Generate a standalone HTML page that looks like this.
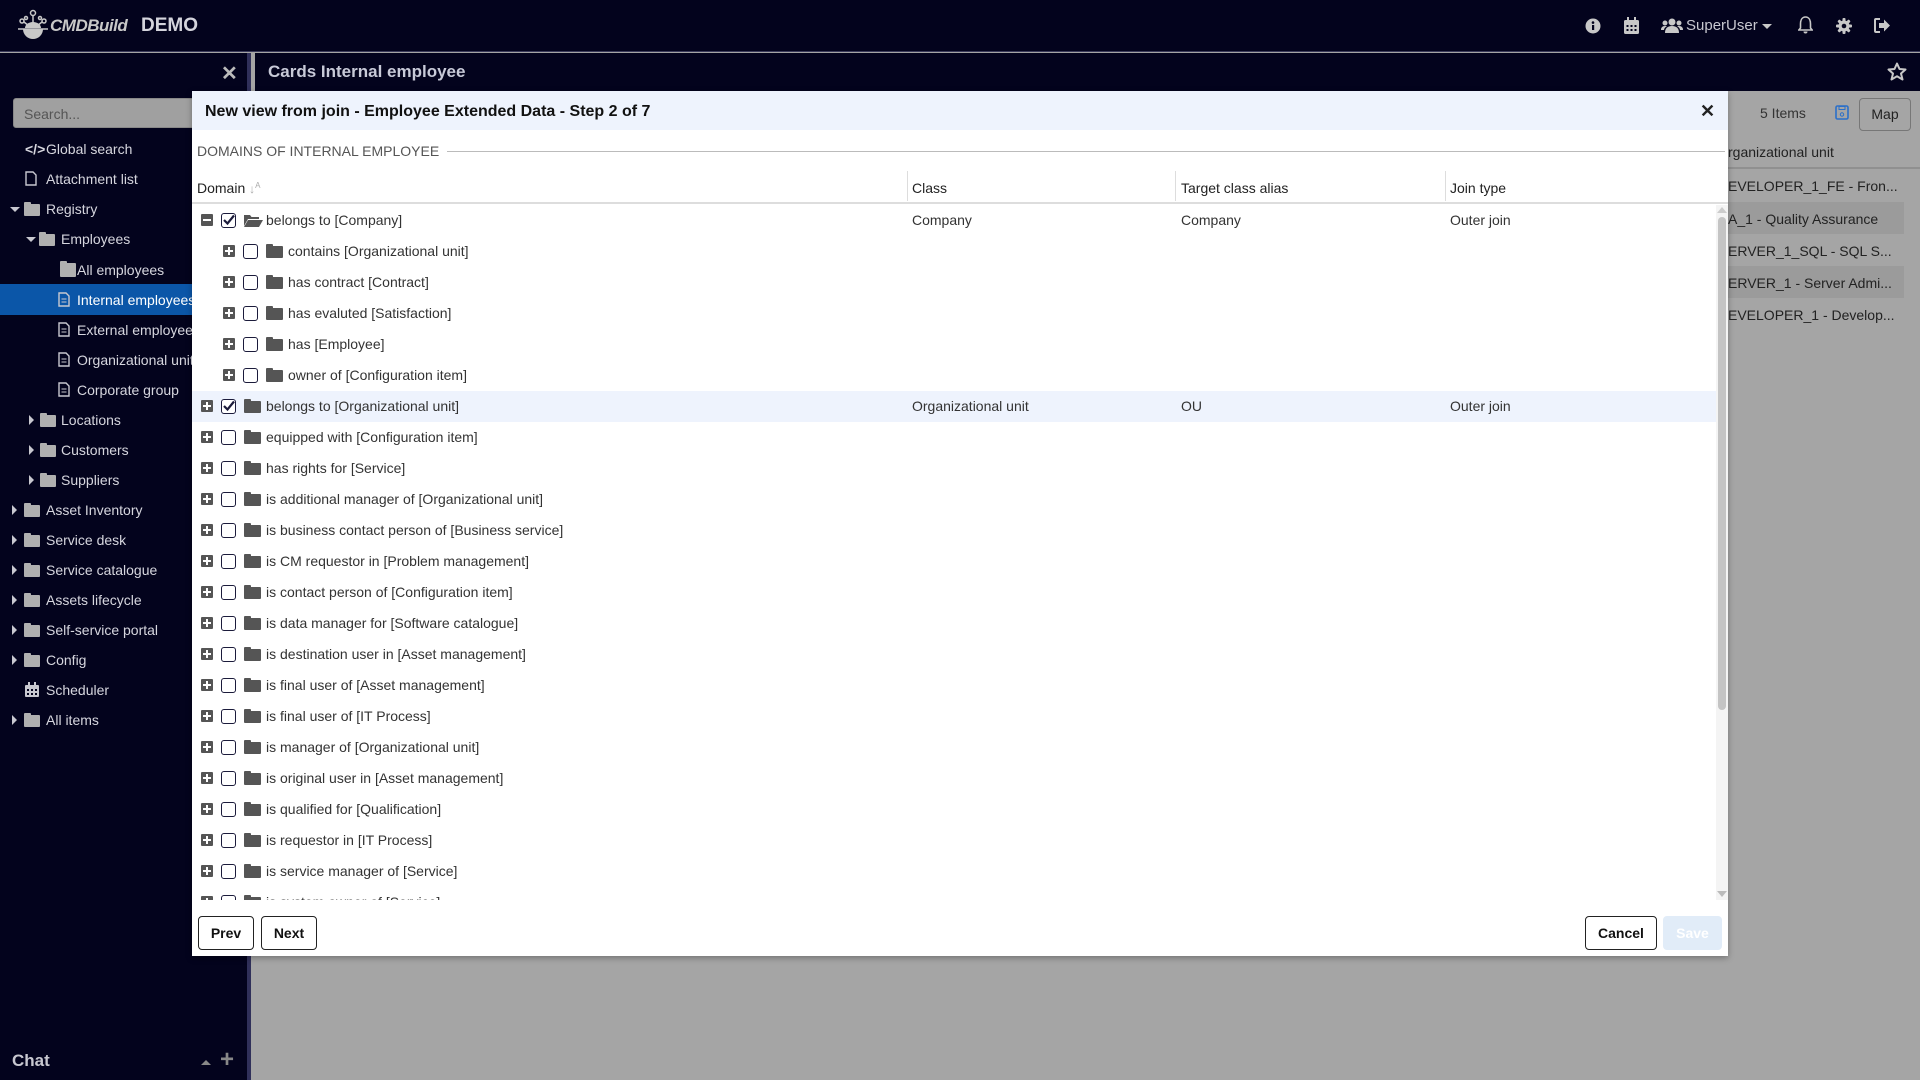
<!DOCTYPE html>
<html><head><meta charset="utf-8">
<style>
*{box-sizing:border-box;margin:0;padding:0}
body{width:1920px;height:1080px;overflow:hidden;background:#a5a5a5;font-family:"Liberation Sans",Arial,sans-serif;position:relative}
.abs{position:absolute}
#top{left:0;top:0;width:1920px;height:52px;background:#03031d;border-bottom:1px solid #3a3a5a}
#side{left:0;top:53px;width:251px;height:1027px;background:#03031d;border-right:4px solid #30305a}
#bar2{left:255px;top:53px;width:1665px;height:38px;background:#03031d}
.si{position:absolute;font-size:14px;color:#d6d6de;white-space:nowrap;line-height:16px}
.fold{display:inline-block;width:16px;height:12px;background:#b0b0b0;border-radius:1px;position:absolute}
.fold:before{content:"";position:absolute;left:0;top:-2px;width:7px;height:3px;background:#b0b0b0;border-radius:1px 1px 0 0}
.car{position:absolute;width:0;height:0;border-top:5px solid transparent;border-bottom:5px solid transparent;border-left:5px solid #c8c8d0}
.card{position:absolute;width:0;height:0;border-left:5px solid transparent;border-right:5px solid transparent;border-top:5px solid #c8c8d0}
#modal{left:192px;top:91px;width:1536px;height:865px;background:#fff;box-shadow:0 2px 6px rgba(0,0,0,.3)}
#mh{left:0;top:0;width:1536px;height:39px;background:#eef3fd}
.row{position:absolute;left:0;width:1525px;height:31px;font-size:14px;color:#333;line-height:31px;white-space:nowrap}
.ex{position:absolute;top:9px;width:12px;height:12px;background:#555;border-radius:1px}
.ex:before{content:"";position:absolute;left:2px;top:5px;width:8px;height:2px;background:#fff}
.ex.p:after{content:"";position:absolute;left:5px;top:2px;width:2px;height:8px;background:#fff}
.cb{position:absolute;top:8px;width:15px;height:15px;border:1.5px solid #1b1b3b;border-radius:3px;background:#fff}
.fd{position:absolute;top:10px;width:17px;height:12px;background:#555;border-radius:1px}
.fd:before{content:"";position:absolute;left:0;top:-2px;width:7px;height:3px;background:#555;border-radius:1px 1px 0 0}
.btn{position:absolute;height:34px;border:1px solid #222;border-radius:4px;background:#fff;font-size:14px;font-weight:bold;color:#111;text-align:center;line-height:32px}
</style></head><body>
<div id="top" class="abs">
 <svg class="abs" style="left:14px;top:9px" width="40" height="34" viewBox="0 0 40 34"><g fill="none" stroke="#c8c8c8" stroke-width="1.5"><circle cx="19" cy="4" r="2.5"/><line x1="19" y1="6.5" x2="19" y2="16"/><circle cx="8" cy="12" r="2"/><circle cx="30" cy="12" r="2"/><circle cx="12" cy="9" r="1.5"/><circle cx="26" cy="9" r="1.5"/><line x1="10" y1="13" x2="15" y2="17"/><line x1="28" y1="13" x2="23" y2="17"/></g><path d="M9 20 A10 10 0 0 0 29 20 Z" fill="#c8c8c8"/><path d="M11 19 A8 6 0 0 1 27 19" fill="#c8c8c8"/><line x1="4" y1="20" x2="34" y2="20" stroke="#c8c8c8" stroke-width="1.5"/></svg>
 <div class="abs" style="left:50px;top:16px;font-size:17px;font-style:italic;font-weight:bold;color:#c8c8c8;letter-spacing:-0.5px">CMDBuild</div>
 <div class="abs" style="left:141px;top:15px;font-size:19px;font-weight:bold;color:#d4d4dc">DEMO</div>
 <svg class="abs" style="left:1585px;top:18px" width="16" height="16"><circle cx="8" cy="8" r="7.5" fill="#c8c8c8"/><rect x="7" y="7" width="2.2" height="5" fill="#03031d"/><circle cx="8" cy="4.6" r="1.3" fill="#03031d"/></svg>
 <svg class="abs" style="left:1624px;top:17px" width="15" height="17"><rect x="0" y="3" width="15" height="14" rx="1.5" fill="#c8c8c8"/><rect x="3" y="0" width="2" height="4" fill="#c8c8c8"/><rect x="10" y="0" width="2" height="4" fill="#c8c8c8"/><g fill="#03031d"><rect x="2.5" y="8" width="2" height="2"/><rect x="6.5" y="8" width="2" height="2"/><rect x="10.5" y="8" width="2" height="2"/><rect x="2.5" y="12" width="2" height="2"/><rect x="6.5" y="12" width="2" height="2"/><rect x="10.5" y="12" width="2" height="2"/></g></svg>
 <svg class="abs" style="left:1661px;top:18px" width="22" height="15"><g fill="#c8c8c8"><circle cx="11" cy="4" r="3.5"/><path d="M4 15 Q4 8 11 8 Q18 8 18 15Z"/><circle cx="4" cy="5" r="2.5"/><circle cx="18" cy="5" r="2.5"/><path d="M0 12 Q0 8 4 8 L6 8 Q3 10 3 12Z"/><path d="M22 12 Q22 8 18 8 L16 8 Q19 10 19 12Z"/></g></svg>
 <div class="abs" style="left:1686px;top:17px;font-size:15px;color:#c8c8d0">SuperUser</div>
 <div class="abs card" style="left:1762px;top:24px;border-top-color:#c8c8c8;border-left-width:5px;border-right-width:5px"></div>
 <svg class="abs" style="left:1798px;top:16px" width="15" height="18"><path d="M7.5 1 C3.5 1 2.5 5 2.5 8 L2.5 12 L0.8 14 L14.2 14 L12.5 12 L12.5 8 C12.5 5 11.5 1 7.5 1Z" fill="none" stroke="#c8c8c8" stroke-width="1.6"/><path d="M5.5 15.5 A2 2 0 0 0 9.5 15.5Z" fill="#c8c8c8"/></svg>
 <svg class="abs" style="left:1836px;top:18px" width="16" height="16" viewBox="0 0 16 16"><g fill="#c8c8c8"><circle cx="8" cy="8" r="5.5"/><rect x="6.5" y="0" width="3" height="16" rx="1"/><rect x="0" y="6.5" width="16" height="3" rx="1"/><rect x="6.5" y="0" width="3" height="16" rx="1" transform="rotate(45 8 8)"/><rect x="6.5" y="0" width="3" height="16" rx="1" transform="rotate(-45 8 8)"/></g><circle cx="8" cy="8" r="2.3" fill="#03031d"/></svg>
 <svg class="abs" style="left:1874px;top:18px" width="17" height="15"><path d="M6 1 L2 1 Q1 1 1 2 L1 13 Q1 14 2 14 L6 14" fill="none" stroke="#c8c8c8" stroke-width="2"/><path d="M5 5 L10 5 L10 1.5 L16 7.5 L10 13.5 L10 10 L5 10Z" fill="#c8c8c8"/></svg>
</div>
<div id="bar2" class="abs">
 <div class="abs" style="left:13px;top:9px;font-size:17px;font-weight:bold;color:#c8cad8">Cards Internal employee</div>
 <svg class="abs" style="left:1632px;top:9px" width="20" height="19"><path d="M10 1.5 L12.5 7 L18.5 7.5 L14 11.5 L15.5 17.5 L10 14.3 L4.5 17.5 L6 11.5 L1.5 7.5 L7.5 7Z" fill="none" stroke="#c8c8c8" stroke-width="2" stroke-linejoin="round"/></svg>
</div>
<div id="side" class="abs">
 <div class="abs" style="left:221px;top:8px;font-size:20px;font-weight:bold;color:#bbb">✕</div>
 <div class="abs" style="left:13px;top:45px;width:200px;height:30px;background:#a0a0a0;border:1px solid #888;border-radius:3px;font-size:14px;color:#555;padding:7px 10px">Search...</div>
 <div class="abs" style="left:0;top:231px;width:251px;height:31px;background:#0b56a8"></div>
</div>
<div class="si" style="left:25px;top:141px;font-weight:bold">&lt;/&gt;</div><div class="si" style="left:46px;top:141px">Global search</div>
<svg class="abs" style="left:25px;top:171px" width="12" height="15"><path d="M1 1 L8 1 L11 4 L11 14 L1 14Z" fill="none" stroke="#c8c8d0" stroke-width="1.4"/></svg><div class="si" style="left:46px;top:171px">Attachment list</div>
<div class="card" style="left:10px;top:207px"></div><div class="fold" style="left:24px;top:204px"></div><div class="si" style="left:46px;top:201px">Registry</div>
<div class="card" style="left:26px;top:237px"></div><div class="fold" style="left:39px;top:234px"></div><div class="si" style="left:61px;top:231px">Employees</div>
<div class="fold" style="left:60px;top:263px;height:14px"></div><div class="si" style="left:77px;top:262px">All employees</div>
<svg class="abs" style="left:58px;top:292px" width="12" height="15"><path d="M1 1 L8 1 L11 4 L11 14 L1 14Z" fill="none" stroke="#c8c8d0" stroke-width="1.4"/><path d="M3.5 7h5M3.5 10h5" stroke="#c8c8d0"/></svg><div class="si" style="left:77px;top:292px;color:#fff">Internal employees</div>
<svg class="abs" style="left:58px;top:322px" width="12" height="15"><path d="M1 1 L8 1 L11 4 L11 14 L1 14Z" fill="none" stroke="#c8c8d0" stroke-width="1.4"/><path d="M3.5 7h5M3.5 10h5" stroke="#c8c8d0"/></svg><div class="si" style="left:77px;top:322px">External employees</div>
<svg class="abs" style="left:58px;top:352px" width="12" height="15"><path d="M1 1 L8 1 L11 4 L11 14 L1 14Z" fill="none" stroke="#c8c8d0" stroke-width="1.4"/><path d="M3.5 7h5M3.5 10h5" stroke="#c8c8d0"/></svg><div class="si" style="left:77px;top:352px">Organizational unit</div>
<svg class="abs" style="left:58px;top:382px" width="12" height="15"><path d="M1 1 L8 1 L11 4 L11 14 L1 14Z" fill="none" stroke="#c8c8d0" stroke-width="1.4"/><path d="M3.5 7h5M3.5 10h5" stroke="#c8c8d0"/></svg><div class="si" style="left:77px;top:382px">Corporate group</div>
<div class="car" style="left:29px;top:415px"></div><div class="fold" style="left:40px;top:415px"></div><div class="si" style="left:61px;top:412px">Locations</div>
<div class="car" style="left:29px;top:445px"></div><div class="fold" style="left:40px;top:445px"></div><div class="si" style="left:61px;top:442px">Customers</div>
<div class="car" style="left:29px;top:475px"></div><div class="fold" style="left:40px;top:475px"></div><div class="si" style="left:61px;top:472px">Suppliers</div>
<div class="car" style="left:12px;top:505px"></div><div class="fold" style="left:24px;top:505px"></div><div class="si" style="left:46px;top:502px">Asset Inventory</div>
<div class="car" style="left:12px;top:535px"></div><div class="fold" style="left:24px;top:535px"></div><div class="si" style="left:46px;top:532px">Service desk</div>
<div class="car" style="left:12px;top:565px"></div><div class="fold" style="left:24px;top:565px"></div><div class="si" style="left:46px;top:562px">Service catalogue</div>
<div class="car" style="left:12px;top:595px"></div><div class="fold" style="left:24px;top:595px"></div><div class="si" style="left:46px;top:592px">Assets lifecycle</div>
<div class="car" style="left:12px;top:625px"></div><div class="fold" style="left:24px;top:625px"></div><div class="si" style="left:46px;top:622px">Self-service portal</div>
<div class="car" style="left:12px;top:655px"></div><div class="fold" style="left:24px;top:655px"></div><div class="si" style="left:46px;top:652px">Config</div>
<svg class="abs" style="left:25px;top:682px" width="14" height="15"><rect x="0" y="3" width="14" height="12" rx="1" fill="#c8c8d0"/><rect x="3" y="0" width="2" height="4" fill="#c8c8d0"/><rect x="9" y="0" width="2" height="4" fill="#c8c8d0"/><g fill="#03031d"><rect x="2" y="7" width="2" height="2"/><rect x="6" y="7" width="2" height="2"/><rect x="10" y="7" width="2" height="2"/><rect x="2" y="11" width="2" height="2"/><rect x="6" y="11" width="2" height="2"/><rect x="10" y="11" width="2" height="2"/></g></svg><div class="si" style="left:46px;top:682px">Scheduler</div>
<div class="car" style="left:12px;top:715px"></div><div class="fold" style="left:24px;top:715px"></div><div class="si" style="left:46px;top:712px">All items</div>
<div class="abs" style="left:12px;top:1051px;font-size:17px;font-weight:bold;color:#c8c8d0">Chat</div>
<div class="abs card" style="left:201px;top:1060px;border-top:none;border-bottom:5px solid #888"></div>
<div class="abs" style="left:220px;top:1046px;font-size:24px;font-weight:bold;color:#888">+</div>
<div class="abs" style="left:1760px;top:105px;font-size:14px;color:#333">5 Items</div>
<svg class="abs" style="left:1835px;top:105px" width="14" height="15"><rect x="1" y="1" width="12" height="13" rx="1.5" fill="none" stroke="#2a6fc9" stroke-width="1.6"/><rect x="4" y="1.5" width="6" height="3" fill="none" stroke="#2a6fc9"/><circle cx="7" cy="9.5" r="1.7" fill="none" stroke="#2a6fc9"/></svg>
<div class="abs" style="left:1859px;top:98px;width:52px;height:33px;border:1px solid #777;border-radius:4px;font-size:14px;color:#222;text-align:center;line-height:31px">Map</div>
<div class="abs" style="left:1728px;top:144px;font-size:14px;color:#222">rganizational unit</div>
<div class="abs" style="left:1728px;top:167px;width:192px;height:2px;background:#909090"></div>
<div class="abs" style="left:1728px;top:202px;width:176px;height:32px;background:#9b9b9b"></div>
<div class="abs" style="left:1728px;top:266px;width:176px;height:32px;background:#9b9b9b"></div>
<div class="abs" style="left:1728px;top:178px;font-size:14px;color:#222">EVELOPER_1_FE - Fron...</div>
<div class="abs" style="left:1728px;top:211px;font-size:14px;color:#222">A_1 - Quality Assurance</div>
<div class="abs" style="left:1728px;top:243px;font-size:14px;color:#222">ERVER_1_SQL - SQL S...</div>
<div class="abs" style="left:1728px;top:275px;font-size:14px;color:#222">ERVER_1 - Server Admi...</div>
<div class="abs" style="left:1728px;top:307px;font-size:14px;color:#222">EVELOPER_1 - Develop...</div>
<div id="modal" class="abs">
 <div id="mh" class="abs"><div class="abs" style="left:13px;top:12px;font-size:16px;font-weight:bold;color:#111">New view from join - Employee Extended Data - Step 2 of 7</div>
  <div class="abs" style="left:1508px;top:10px;font-size:18px;font-weight:bold;color:#222">✕</div></div>
 <div class="abs" style="left:5px;top:52px;font-size:14px;color:#555;background:#fff;padding-right:8px;z-index:2">DOMAINS OF INTERNAL EMPLOYEE</div>
 <div class="abs" style="left:5px;top:60px;width:1528px;height:1px;background:#bbb"></div>
 <div class="abs" style="left:5px;top:89px;font-size:14px;color:#222">Domain <span style="color:#aaa;font-size:12px">↓<sup style="font-size:8px">A</sup></span></div>
 <div class="abs" style="left:715px;top:80px;width:1px;height:30px;background:#ddd"></div>
 <div class="abs" style="left:720px;top:89px;font-size:14px;color:#222">Class</div>
 <div class="abs" style="left:983px;top:80px;width:1px;height:30px;background:#ddd"></div>
 <div class="abs" style="left:989px;top:89px;font-size:14px;color:#222">Target class alias</div>
 <div class="abs" style="left:1253px;top:80px;width:1px;height:30px;background:#ddd"></div>
 <div class="abs" style="left:1258px;top:89px;font-size:14px;color:#222">Join type</div>
 <div class="abs" style="left:0;top:111px;width:1536px;height:2px;background:#ddd"></div>
 <div class="abs" style="left:0;top:114px;width:1536px;height:695px;overflow:hidden">
  <div class="row" style="top:0"><div class="ex" style="left:9px"></div><div class="cb" style="left:29px"><svg width="12" height="12" style="position:absolute;left:1px;top:0"><path d="M1 6 L4.5 9.5 L11 1.5" fill="none" stroke="#1b1b3b" stroke-width="2.2"/></svg></div><svg style="position:absolute;left:52px;top:9px" width="19" height="13"><path d="M0 1 L6 1 L7.5 3 L15 3 L15 5 L4 5 L0 12Z" fill="#555"/><path d="M4 6 L19 6 L15 13 L0 13Z" fill="#555"/></svg><span style="position:absolute;left:74px">belongs to [Company]</span><span style="position:absolute;left:720px">Company</span><span style="position:absolute;left:989px">Company</span><span style="position:absolute;left:1258px">Outer join</span></div>
  <div class="row" style="top:31px"><div class="ex p" style="left:31px"></div><div class="cb" style="left:51px"></div><div class="fd" style="left:74px"></div><span style="position:absolute;left:96px">contains [Organizational unit]</span></div>
  <div class="row" style="top:62px"><div class="ex p" style="left:31px"></div><div class="cb" style="left:51px"></div><div class="fd" style="left:74px"></div><span style="position:absolute;left:96px">has contract [Contract]</span></div>
  <div class="row" style="top:93px"><div class="ex p" style="left:31px"></div><div class="cb" style="left:51px"></div><div class="fd" style="left:74px"></div><span style="position:absolute;left:96px">has evaluted [Satisfaction]</span></div>
  <div class="row" style="top:124px"><div class="ex p" style="left:31px"></div><div class="cb" style="left:51px"></div><div class="fd" style="left:74px"></div><span style="position:absolute;left:96px">has [Employee]</span></div>
  <div class="row" style="top:155px"><div class="ex p" style="left:31px"></div><div class="cb" style="left:51px"></div><div class="fd" style="left:74px"></div><span style="position:absolute;left:96px">owner of [Configuration item]</span></div>
  <div class="row" style="top:186px;background:#eef3fd"><div class="ex p" style="left:9px"></div><div class="cb" style="left:29px"><svg width="12" height="12" style="position:absolute;left:1px;top:0"><path d="M1 6 L4.5 9.5 L11 1.5" fill="none" stroke="#1b1b3b" stroke-width="2.2"/></svg></div><div class="fd" style="left:52px"></div><span style="position:absolute;left:74px">belongs to [Organizational unit]</span><span style="position:absolute;left:720px">Organizational unit</span><span style="position:absolute;left:989px">OU</span><span style="position:absolute;left:1258px">Outer join</span></div>
  <div class="row" style="top:217px"><div class="ex p" style="left:9px"></div><div class="cb" style="left:29px"></div><div class="fd" style="left:52px"></div><span style="position:absolute;left:74px">equipped with [Configuration item]</span></div>
  <div class="row" style="top:248px"><div class="ex p" style="left:9px"></div><div class="cb" style="left:29px"></div><div class="fd" style="left:52px"></div><span style="position:absolute;left:74px">has rights for [Service]</span></div>
  <div class="row" style="top:279px"><div class="ex p" style="left:9px"></div><div class="cb" style="left:29px"></div><div class="fd" style="left:52px"></div><span style="position:absolute;left:74px">is additional manager of [Organizational unit]</span></div>
  <div class="row" style="top:310px"><div class="ex p" style="left:9px"></div><div class="cb" style="left:29px"></div><div class="fd" style="left:52px"></div><span style="position:absolute;left:74px">is business contact person of [Business service]</span></div>
  <div class="row" style="top:341px"><div class="ex p" style="left:9px"></div><div class="cb" style="left:29px"></div><div class="fd" style="left:52px"></div><span style="position:absolute;left:74px">is CM requestor in [Problem management]</span></div>
  <div class="row" style="top:372px"><div class="ex p" style="left:9px"></div><div class="cb" style="left:29px"></div><div class="fd" style="left:52px"></div><span style="position:absolute;left:74px">is contact person of [Configuration item]</span></div>
  <div class="row" style="top:403px"><div class="ex p" style="left:9px"></div><div class="cb" style="left:29px"></div><div class="fd" style="left:52px"></div><span style="position:absolute;left:74px">is data manager for [Software catalogue]</span></div>
  <div class="row" style="top:434px"><div class="ex p" style="left:9px"></div><div class="cb" style="left:29px"></div><div class="fd" style="left:52px"></div><span style="position:absolute;left:74px">is destination user in [Asset management]</span></div>
  <div class="row" style="top:465px"><div class="ex p" style="left:9px"></div><div class="cb" style="left:29px"></div><div class="fd" style="left:52px"></div><span style="position:absolute;left:74px">is final user of [Asset management]</span></div>
  <div class="row" style="top:496px"><div class="ex p" style="left:9px"></div><div class="cb" style="left:29px"></div><div class="fd" style="left:52px"></div><span style="position:absolute;left:74px">is final user of [IT Process]</span></div>
  <div class="row" style="top:527px"><div class="ex p" style="left:9px"></div><div class="cb" style="left:29px"></div><div class="fd" style="left:52px"></div><span style="position:absolute;left:74px">is manager of [Organizational unit]</span></div>
  <div class="row" style="top:558px"><div class="ex p" style="left:9px"></div><div class="cb" style="left:29px"></div><div class="fd" style="left:52px"></div><span style="position:absolute;left:74px">is original user in [Asset management]</span></div>
  <div class="row" style="top:589px"><div class="ex p" style="left:9px"></div><div class="cb" style="left:29px"></div><div class="fd" style="left:52px"></div><span style="position:absolute;left:74px">is qualified for [Qualification]</span></div>
  <div class="row" style="top:620px"><div class="ex p" style="left:9px"></div><div class="cb" style="left:29px"></div><div class="fd" style="left:52px"></div><span style="position:absolute;left:74px">is requestor in [IT Process]</span></div>
  <div class="row" style="top:651px"><div class="ex p" style="left:9px"></div><div class="cb" style="left:29px"></div><div class="fd" style="left:52px"></div><span style="position:absolute;left:74px">is service manager of [Service]</span></div>
  <div class="row" style="top:682px"><div class="ex p" style="left:9px"></div><div class="cb" style="left:29px"></div><div class="fd" style="left:52px"></div><span style="position:absolute;left:74px">is system owner of [Service]</span></div>
  <div class="abs" style="left:1524px;top:0;width:12px;height:695px;background:#f4f4f4"></div>
  <div class="abs" style="left:1526px;top:12px;width:8px;height:493px;background:#c4c4c4;border-radius:4px"></div>
  <div class="abs" style="left:1525px;top:2px;width:0;height:0;border-left:5px solid transparent;border-right:5px solid transparent;border-bottom:6px solid #ccc"></div>
  <div class="abs" style="left:1525px;top:686px;width:0;height:0;border-left:5px solid transparent;border-right:5px solid transparent;border-top:6px solid #bbb"></div>
 </div>
 <div class="btn" style="left:6px;top:825px;width:56px">Prev</div>
 <div class="btn" style="left:69px;top:825px;width:56px">Next</div>
 <div class="btn" style="left:1393px;top:825px;width:72px">Cancel</div>
 <div class="btn" style="left:1471px;top:825px;width:59px;background:#e1ecf8;border-color:#e1ecf8;color:#fff">Save</div>
</div>
</body></html>
